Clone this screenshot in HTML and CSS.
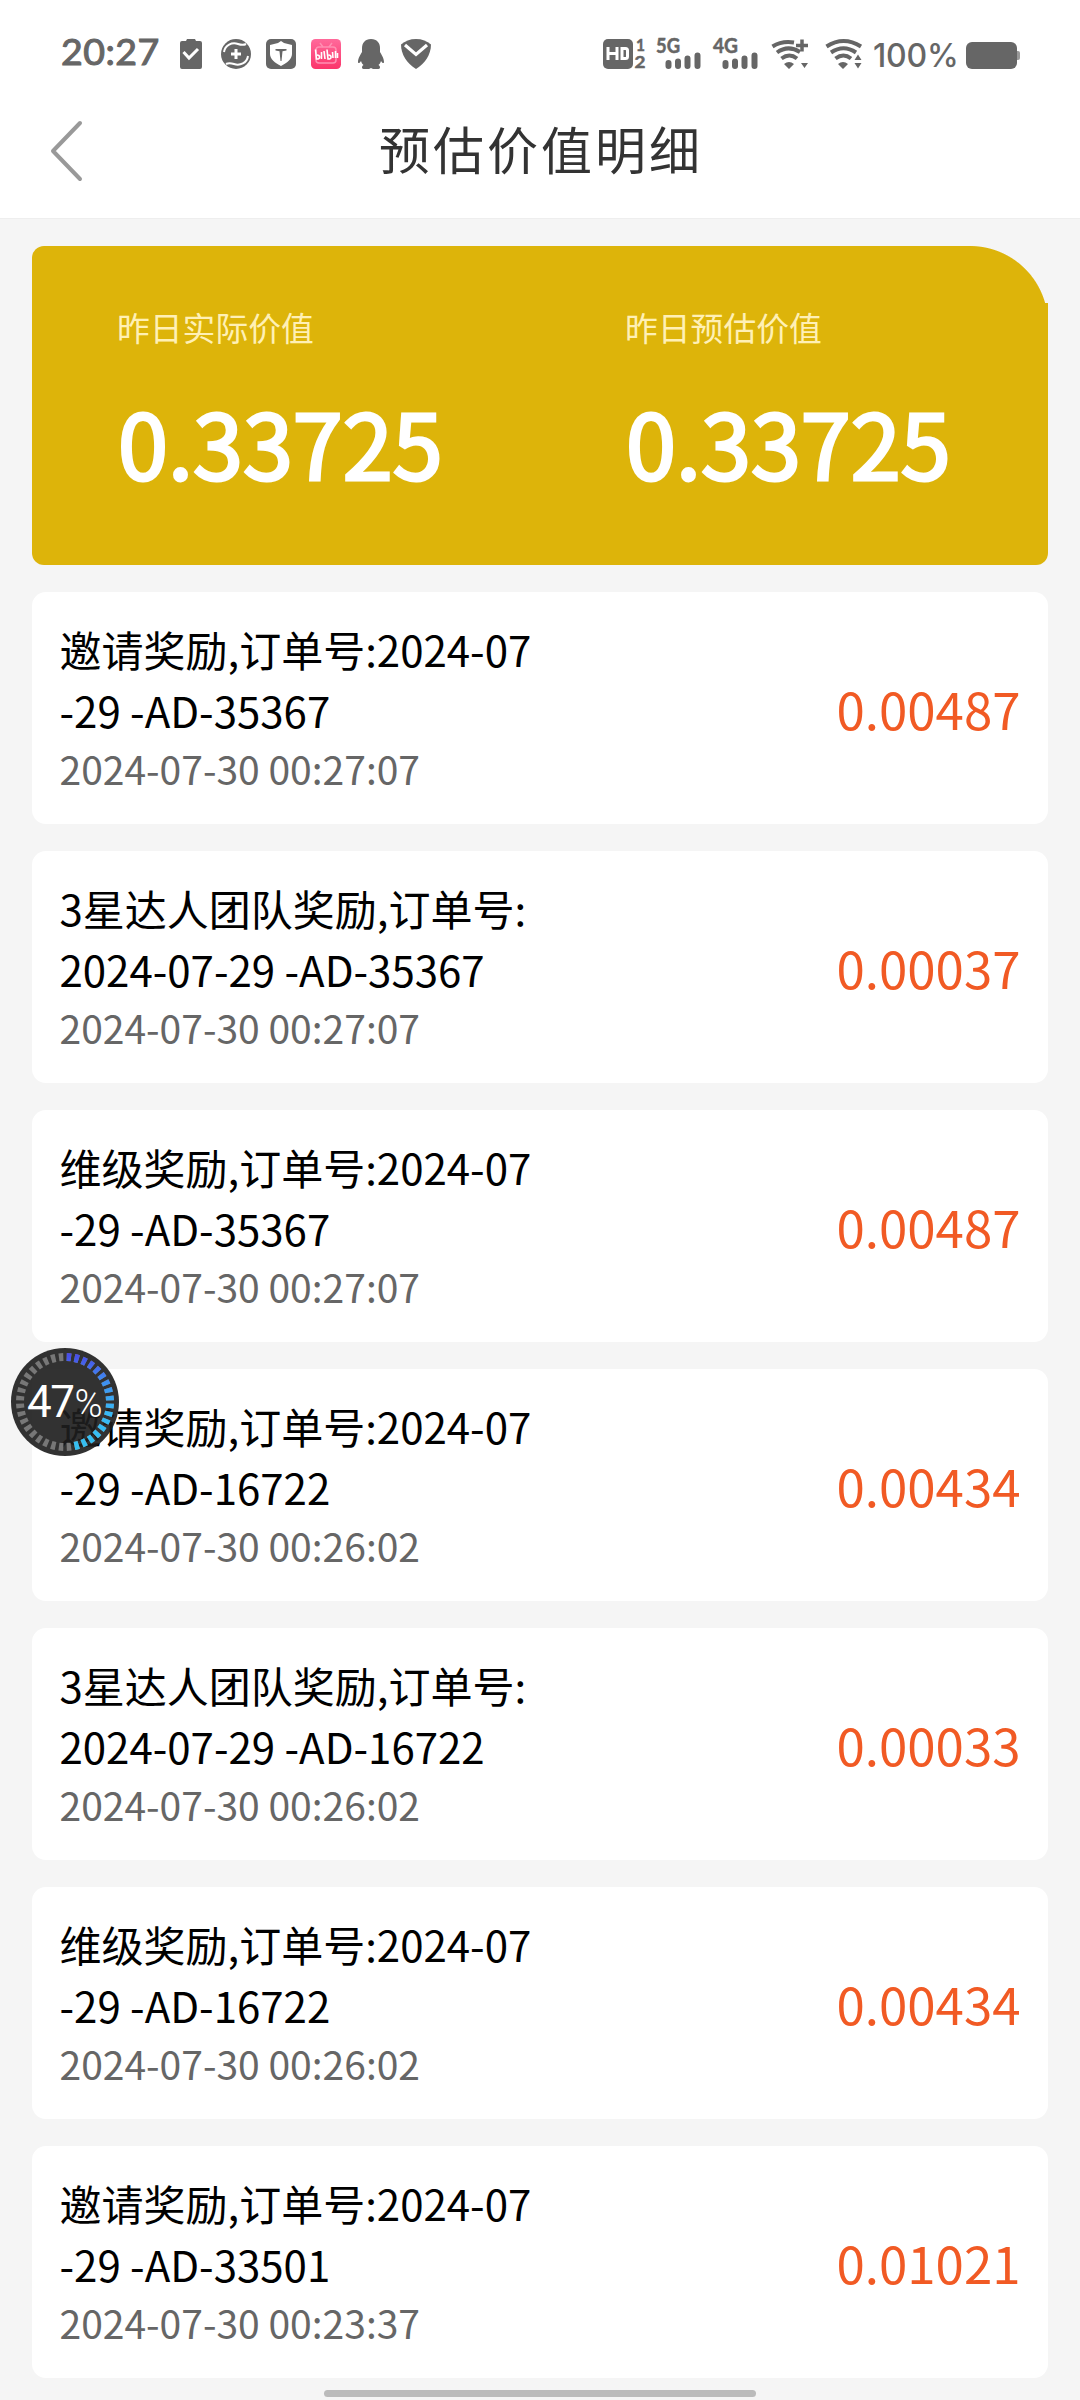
FILE: index.html
```html
<!DOCTYPE html>
<html lang="zh-CN">
<head>
<meta charset="utf-8">
<title>预估价值明细</title>
<link rel="stylesheet" href="styles.css">
</head>
<body>
<div class="screen">
  <header class="top">
    <div class="status">
      <span class="clock">20:27</span>
      <div class="notices">
        <svg width="30" height="30" viewBox="0 0 30 30"><path fill="#666" d="M6 2h4l1-2h8l1 2h4q2 0 2 2v24q0 2-2 2H6q-2 0-2-2V4q0-2 2-2z"/><path d="M7.500 13l5.500 6 9-9" fill="none" stroke="#fff" stroke-width="3"/></svg>
        <svg width="30" height="30" viewBox="0 0 30 30"><circle cx="15" cy="15" r="15" fill="#666"/><path d="M3 13C4 6 11 3 17 5c3 1 6 1 8 0M27 17c-1 7-8 10-14 8-3-1-6-1-8 0" fill="none" stroke="#fff" stroke-width="2"/><path d="M15 10v10M10 15h10" stroke="#fff" stroke-width="3"/></svg>
        <svg width="30" height="30" viewBox="0 0 30 30"><rect width="30" height="30" rx="5" fill="#666"/><path d="M15 2l3 2 8 2v9c0 5-5 9-11 12C9 24 4 20 4 15V6l8-2z" fill="#fff"/><path d="M9.500 10h11v1.500l-4 .7-1 9.800h-1l-1-9.800-4-.7z" fill="#666"/></svg>
        <svg width="30" height="30" viewBox="0 0 30 30"><defs><linearGradient id="pink" x2="0" y2="1"><stop stop-color="#ff6a9b"/><stop offset="1" stop-color="#fb356b"/></linearGradient></defs><rect width="30" height="30" rx="4.500" fill="url(#pink)"/><g fill="none" stroke="#ff8fb2" stroke-width="1.500"><rect x="5" y="8" width="20" height="16" rx="3"/><path d="M9 4l3 4M21 4l-3 4"/></g><path d="M4.500 10.500l1 9.500c4 .5 4-4 .5-4M10.500 13v7M13 12l1 8M16 10.500l1 9.500c4 .5 4-4 .5-4M21.500 13l.5 6M24.500 12v7M26.500 14v5" fill="none" stroke="#fff" stroke-width="1.600"/></svg>
        <svg width="30" height="30" viewBox="0 0 30 30"><path fill="#666" d="M15 0c6 0 9 4 9 9v4c1 2 4 6 4 10 0 2-2 1-3-1-.5 2-1.500 3-2.500 4 2 1 2 4 0 4H17l-2-1-2 1H7.500c-2 0-2-3 0-4C6.500 25 5.500 24 5 22c-1 2-3 3-3 1 0-4 3-8 4-10V9c0-5 3-9 9-9z"/></svg>
        <svg width="30" height="30" viewBox="0 0 30 30"><path fill="#666" d="M15 0c6 0 11 2 15 5.500 0 10-6 19-15 24.500C6 24.500 0 15.500 0 5.500 4 2 9 0 15 0z"/><path d="M4 6l11 9.500L26 6" fill="none" stroke="#fff" stroke-width="3.200"/></svg>
      </div>
      <div class="signals">
        <svg class="hd" width="44" height="32" viewBox="0 0 44 32"><rect y="1" width="30" height="30" rx="5" fill="#666"/><path d="M5 9v13M14 9v13M5 15.500h9M19 10.500h3.500q2 0 2 2v6q0 2-2 2H19z" fill="none" stroke="#fff" stroke-width="3"/><g class="tiny"><text x="33" y="13" textLength="9" lengthAdjust="spacingAndGlyphs">1</text><text x="31.500" y="30" textLength="11" lengthAdjust="spacingAndGlyphs">2</text></g></svg>
        <svg class="net" width="46" height="32" viewBox="0 0 46 32"><text class="gen" x="0" y="15" textLength="24" lengthAdjust="spacingAndGlyphs">5G</text><path d="M12.500 25v3M22 23.500v4.500M31.500 20.500v7.500M41.500 17.500V28" stroke="#666" stroke-width="6" stroke-linecap="round"/></svg>
        <svg class="net" width="46" height="32" viewBox="0 0 46 32"><text class="gen" x="0" y="15" textLength="25" lengthAdjust="spacingAndGlyphs">4G</text><path d="M12.500 25v3M22 23.500v4.500M31.500 20.500v7.500M41.500 17.500V28" stroke="#666" stroke-width="6" stroke-linecap="round"/></svg>
        <svg class="wifi" width="38" height="32" viewBox="0 0 38 32"><g fill="none" stroke="#666" stroke-width="4"><path d="M1.500 8.500Q11 2.500 23 4.500"/><path d="M6 14.500Q17 6.500 29 14"/><path d="M10.500 20.500q8-6 15.500 0"/><path d="M31 1.500v12M25 7.500h12" stroke-width="3.500"/></g><path d="M13 26q5-4 10 0l-5 5zM30 25h7l-3.500 5z" fill="#666"/></svg>
        <svg class="wifi2" width="38" height="32" viewBox="0 0 38 32"><g fill="none" stroke="#666" stroke-width="4"><path d="M1.500 8.500q17-11 34.500 0"/><path d="M6 14.500q12.500-8.500 25 0"/><path d="M10.500 20.500q8-6 15.500 0"/></g><path d="M13 26q5-4 10 0l-5 5zM29.500 22h7L33 16.500zM29.500 25h7L33 30.500z" fill="#666"/></svg>
        <span class="percent">100%</span>
        <svg class="battery" width="54" height="27" viewBox="0 0 54 27"><rect width="51" height="27" rx="6" fill="#666"/><path d="M51 9h1q2 0 2 2v5q0 2-2 2h-1z" fill="#999"/></svg>
      </div>
    </div>
    <nav class="nav">
      <svg class="back" width="36" height="64" viewBox="0 0 36 64"><path d="M32 4L5 32l27 28" fill="none" stroke="#999" stroke-width="4" stroke-linecap="round" stroke-linejoin="round"/></svg>
      <h1 class="title">预估价值明细</h1>
    </nav>
  </header>

  <main class="content">
    <section class="summary">
      <div class="stat"><div class="label">昨日实际价值</div><div class="value">0.33725</div></div>
      <div class="stat"><div class="label">昨日预估价值</div><div class="value">0.33725</div></div>
    </section>
    <article class="card"><div class="info"><p class="name">邀请奖励,订单号:2024-07<br>-29 -AD-35367</p><time class="date">2024-07-30 00:27:07</time></div><span class="amount">0.00487</span></article>
    <article class="card"><div class="info"><p class="name">3星达人团队奖励,订单号:<br>2024-07-29 -AD-35367</p><time class="date">2024-07-30 00:27:07</time></div><span class="amount">0.00037</span></article>
    <article class="card"><div class="info"><p class="name">维级奖励,订单号:2024-07<br>-29 -AD-35367</p><time class="date">2024-07-30 00:27:07</time></div><span class="amount">0.00487</span></article>
    <article class="card"><div class="info"><p class="name">邀请奖励,订单号:2024-07<br>-29 -AD-16722</p><time class="date">2024-07-30 00:26:02</time></div><span class="amount">0.00434</span></article>
    <article class="card"><div class="info"><p class="name">3星达人团队奖励,订单号:<br>2024-07-29 -AD-16722</p><time class="date">2024-07-30 00:26:02</time></div><span class="amount">0.00033</span></article>
    <article class="card"><div class="info"><p class="name">维级奖励,订单号:2024-07<br>-29 -AD-16722</p><time class="date">2024-07-30 00:26:02</time></div><span class="amount">0.00434</span></article>
    <article class="card"><div class="info"><p class="name">邀请奖励,订单号:2024-07<br>-29 -AD-33501</p><time class="date">2024-07-30 00:23:37</time></div><span class="amount">0.01021</span></article>
  </main>

  <div class="floater">
    <svg class="ring" width="108" height="108" viewBox="0 0 108 108">
      <defs><linearGradient id="arc" gradientUnits="userSpaceOnUse" x1="103" y1="54" x2="5" y2="54"><stop stop-color="#4848e8"/><stop offset=".3" stop-color="#3f90f0"/><stop offset=".6" stop-color="#38b8f4"/><stop offset="1" stop-color="#35c0f0"/></linearGradient></defs>
      <circle class="rest" cx="54" cy="54" r="45" pathLength="360" transform="rotate(-90 54 54)"/>
      <circle class="done" cx="54" cy="54" r="45" pathLength="360" transform="rotate(-90 54 54)"/>
    </svg>
    <span class="load">47<small class="unit">%</small></span>
  </div>
  <div class="homebar"></div>
</div>
</body>
</html>
```
FILE: styles.css
```css
* { box-sizing: border-box; margin: 0; padding: 0; }
body { background: #f5f5f5; font-family: "Noto Sans CJK SC", sans-serif; }
svg { display: block; flex: none; overflow: visible; }
.screen { position: relative; width: 1080px; height: 2400px; overflow: hidden; }

.top { height: 219px; background: #fff; border-bottom: 1px solid #eee; }
.status { display: flex; height: 84px; padding: 39px 60px 0 61px; color: #666; }
.clock { width: 115px; margin-top: -6px; font: 400 37.500px/36px Lato, sans-serif; -webkit-text-stroke: 1.100px #666; letter-spacing: .5px; }
.notices { display: flex; gap: 15px; }
.signals { display: flex; margin: -1px 0 0 auto; }
.net { margin-left: 10px; }
.hd + .net { margin-left: 9px; }
.net + .net { margin-left: 11px; }
.wifi { margin-left: 12px; }
.wifi2 { margin-left: 16px; }
.percent { width: 91px; padding-left: 10px; font: 500 32px/36px Inter, sans-serif; letter-spacing: -.2px; white-space: nowrap; }
.battery { margin: 4px 0 0 12px; }
.tiny, .gen { font-family: Lato, sans-serif; font-weight: 700; fill: #666; }
.tiny { font-size: 17px; stroke: #666; stroke-width: .5px; }
.gen { font-size: 20px; stroke: #666; stroke-width: .5px; }

.nav { display: grid; grid-template-columns: 1fr auto 1fr; align-items: center; height: 134px; }
.back { margin: 0 0 0 48px; }
.title { margin: 0 0 6px 2px; font-size: 51px; font-weight: 400; line-height: 74px; letter-spacing: 3px; color: #333; }

.content { display: grid; gap: 27px; padding: 27px 32px 0; }
.summary {
  display: grid; grid-template-columns: 1fr 1fr; height: 319px; padding-top: 57px;
  border-radius: 12px;
  background:
    linear-gradient(#ddb40a, #ddb40a) 0 57px / 100% 262px no-repeat,
    linear-gradient(#ddb40a, #ddb40a) 0 0 / 938px 58px no-repeat,
    radial-gradient(circle at 0 78px, #ddb40a 77.5px, transparent 78.5px) 938px 0 / 78px 58px no-repeat;
}
.stat { padding-left: 85px; }
.label { font-size: 32.800px; line-height: 48px; color: #fff0b5; }
.value { margin: 25px 0 0 1px; font-size: 90px; line-height: 130px; color: #fff; -webkit-text-stroke: 3px #fff; }

.card {
  display: flex; align-items: center; justify-content: space-between;
  height: 232px; padding: 0 27.500px 0 27.500px; border-radius: 14px; background: #fff;
}
.info { margin-bottom: 3px; }
.name { font-size: 42px; line-height: 61px; color: #000; white-space: nowrap; }
.date { display: block; font-size: 39px; line-height: 56px; color: #666; }
.amount { margin-bottom: 1px; font-size: 51px; line-height: 74px; color: #f15a24; }

.floater { position: absolute; left: 11px; top: 1348px; width: 108px; height: 108px; border-radius: 50%; background: rgba(30, 30, 30, .91); }
.ring { position: absolute; inset: 0; }
.ring circle { fill: none; stroke-width: 8px; }
.rest { stroke: #777; stroke-dasharray: 5.6 4.4; stroke-dashoffset: -2.2px; }
.done { stroke: url(#arc); stroke-dasharray: 5.6 4.4 5.6 4.4 5.6 4.4 5.6 4.4 5.6 4.4 5.6 4.4 5.6 4.4 5.6 4.4 5.6 4.4 5.6 4.4 5.6 4.4 5.6 4.4 5.6 4.4 5.6 4.4 5.6 4.4 5.6 4.4 5.6 194.4; stroke-dashoffset: -2.2px; }
.load { position: absolute; left: 16px; top: 28px; font: 400 44px/52px Roboto, sans-serif; letter-spacing: -1.500px; color: #fff; white-space: nowrap; }
.unit { margin-left: 1px; font-size: 38px; font-weight: 300; }

.homebar { position: absolute; left: 324px; top: 2390px; width: 432px; height: 7px; border-radius: 4px; background: #bbb; }
```
